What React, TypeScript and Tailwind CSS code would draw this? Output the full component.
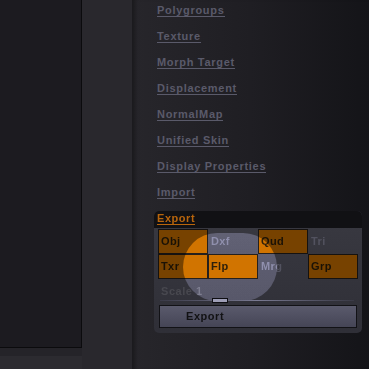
import React from "react";

const items = [
  "Polygroups",
  "Texture",
  "Morph Target",
  "Displacement",
  "NormalMap",
  "Unified Skin",
  "Display Properties",
  "Import",
];

type Cell = { label: string; on: boolean };
const rows: Cell[][] = [
  [
    { label: "Obj", on: true },
    { label: "Dxf", on: false },
    { label: "Qud", on: true },
    { label: "Tri", on: false },
  ],
  [
    { label: "Txr", on: true },
    { label: "Flp", on: true },
    { label: "Mrg", on: false },
    { label: "Grp", on: true },
  ],
];

export default function App() {
  return (
    <div className="w-[369px] h-[369px] flex overflow-hidden bg-[#1d1c21] font-['Liberation_Sans',Arial,sans-serif] font-bold">
      <div className="w-[82px] flex flex-col shrink-0">
        <div className="h-[348px] bg-[#1c1b20] border-r border-b border-[#0b0b0d]" />
        <div className="h-[8px] bg-[#252429]" />
        <div className="flex-1 bg-[#2c2b30]" />
      </div>
      <div className="w-[50px] shrink-0 bg-[#29282d]" />
      <div className="flex-1 bg-gradient-to-r from-[#27262b] via-[#1f1e23] to-[#141418] shadow-[inset_6px_0_4px_-3px_rgba(0,0,0,0.35)] flex flex-col">
        <div className="pt-[5px] pl-[25px] flex flex-col">
          {items.map((t) => (
            <div key={t} className="h-[26px] leading-[11px]">
              <div className="w-fit text-[11px] leading-[11px] tracking-[0.7px] text-[#5a5a6a] border-b border-[#5a5a6a] whitespace-nowrap">
                {t}
              </div>
            </div>
          ))}
        </div>
        <div className="relative isolate ml-[22px] mt-[-2px] w-[208px] h-[122px] rounded-[5px] overflow-hidden bg-gradient-to-b from-[#393941] to-[#2f2f37] flex flex-col">
          <div className="h-[17px] bg-[#111114] pl-[3px] pt-[2px] shrink-0">
            <div className="w-fit text-[11px] leading-[11px] tracking-[0.55px] text-[#b8650c] border-b border-[#b8650c]">
              Export
            </div>
          </div>
          <div className="pl-[4px] pt-[1px] flex flex-col">
            {rows.map((r, i) => (
              <div key={i} className="flex h-[25px]">
                {r.map((c) => (
                  <div
                    key={c.label}
                    className={
                      c.on
                        ? "w-[50px] h-[25px] bg-[#774200] border border-[#151210] flex items-center pl-[2px] text-[11px] tracking-[0.4px] text-[#1a1206]"
                        : "w-[50px] h-[25px] flex items-center pl-[3px] text-[11px] tracking-[0.4px] text-[#52525f]"
                    }
                  >
                    {c.label}
                  </div>
                ))}
              </div>
            ))}
          </div>
          <div className="h-[19px] pl-[7px] pt-[7px] text-[11px] leading-[11px] tracking-[0.55px] text-[#48484f]">
            Scale 1
          </div>
          <div className="absolute left-[29px] top-[22px] w-[94px] h-[68px] rounded-full bg-[#6e6e74] mix-blend-color-dodge blur-[0.5px] pointer-events-none" />
          <div className="relative h-[6px] ml-[6px] w-[194px]">
            <div className="absolute left-0 right-0 top-[2px] h-[1px] bg-gradient-to-r from-[#3a3a48] via-[#7a7a92] to-[#3a3a46]" />
            <div className="absolute left-[52px] top-0 w-[16px] h-[5px] bg-[#9e9eb6] border border-[#0f0f13]" />
          </div>
          <div className="ml-[5px] mt-[1px] w-[198px] h-[23px] border border-[#121216] bg-gradient-to-b from-[#5a5a6c] to-[#454556] flex items-center pl-[26px] text-[11px] tracking-[0.55px] text-[#121214]">
            Export
          </div>
        </div>
      </div>
    </div>
  );
}
